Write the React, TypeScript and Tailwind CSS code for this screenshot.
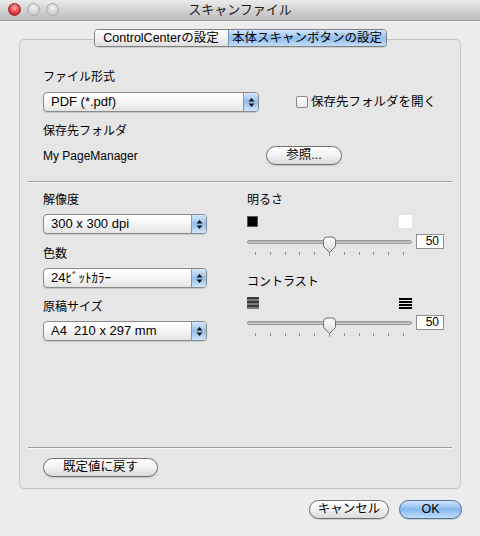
import React from "react";

const FONT = "font-['Liberation_Sans','Noto_Sans_CJK_JP',sans-serif]";

function Arrows() {
  return (
    <svg width="7" height="11" viewBox="0 0 7 11">
      <path d="M3.5 1 L6.5 4.5 H0.5 Z" fill="#111" />
      <path d="M3.5 10 L6.5 6.5 H0.5 Z" fill="#111" />
    </svg>
  );
}

function Popup({ label, width }: { label: string; width: string }) {
  return (
    <div
      className={`${width} h-[20px] flex rounded-[4px] border border-[#8a8a8a] bg-gradient-to-b from-white via-[#f6f6f6] to-[#e4e4e4] overflow-hidden shadow-[0_1px_1px_rgba(0,0,0,0.12)]`}
    >
      <span className="flex-1 pl-[7px] text-[13px] leading-[18px] text-black whitespace-pre">
        {label}
      </span>
      <span className="w-[15px] border-l border-[#7798c0] bg-gradient-to-b from-[#d6e8fa] via-[#93bfec] to-[#cfe5fb] flex items-center justify-center">
        <Arrows />
      </span>
    </div>
  );
}

function PushButton({
  label,
  width,
  blue = false,
}: {
  label: string;
  width: string;
  blue?: boolean;
}) {
  return (
    <div
      className={`${width} h-[19px] rounded-full border flex items-center justify-center text-[12.5px] leading-none text-black shadow-[0_1px_1px_rgba(0,0,0,0.15)] ${
        blue
          ? "border-[#4c6f9c] bg-gradient-to-b from-[#d2e6fc] via-[#86b9f0] to-[#c0dcfb]"
          : "border-[#707070] bg-gradient-to-b from-white via-[#f2f2f2] to-[#dadada]"
      }`}
    >
      {label}
    </div>
  );
}

function Thumb() {
  return (
    <svg width="15" height="18" viewBox="0 0 15 18">
      <defs>
        <linearGradient id="tg" x1="0" y1="0" x2="0" y2="1">
          <stop offset="0" stopColor="#ffffff" />
          <stop offset="1" stopColor="#d8d8d8" />
        </linearGradient>
      </defs>
      <path
        d="M1.5 4.5 Q1.5 1 5 1 H10 Q13.5 1 13.5 4.5 V10.5 L7.5 16.5 L1.5 10.5 Z"
        fill="url(#tg)"
        stroke="#6f6f6f"
        strokeWidth="1"
      />
    </svg>
  );
}

function Slider({ value }: { value: number }) {
  const ticks = Array.from({ length: 11 }, (_, i) => i);
  return (
    <div className="flex flex-col">
      <div className="flex items-start h-[16px]">
        <div className="relative w-[165px] h-[16px]">
          <div className="absolute left-0 right-0 top-[6px] h-[4px] rounded-full border border-[#9a9a9a] bg-gradient-to-b from-[#a9a9a9] to-[#d4d4d4]" />
          <div className="absolute left-[75px] top-[2px]">
            <Thumb />
          </div>
        </div>
        <div className="ml-[4px] w-[28px] h-[15px] border border-[#8f8f8f] bg-white text-right pr-[4px] text-[12px] leading-[13px] text-black">
          {value}
        </div>
      </div>
      <div className="mt-[2px] ml-[8px] w-[149px] h-[4px] flex justify-between">
        {ticks.map((t) => (
          <span
            key={t}
            className={`w-px bg-[#8c8c8c] ${t === 5 ? "h-[4px]" : "h-[3px]"}`}
          />
        ))}
      </div>
    </div>
  );
}

function LowContrastIcon() {
  return (
    <div className="w-[12px] h-[12px] flex flex-col">
      {[0, 1, 2, 3, 4, 5].map((i) => (
        <span
          key={i}
          className={`h-[2px] ${i % 2 === 0 ? "bg-[#3a3a3a]" : "bg-[#7c7c7c]"}`}
        />
      ))}
    </div>
  );
}

function HighContrastIcon() {
  return (
    <div className="w-[13px] h-[13px] flex flex-col justify-between py-[1px]">
      {[0, 1, 2, 3].map((i) => (
        <span key={i} className="h-[2px] bg-black" />
      ))}
    </div>
  );
}

export default function App() {
  return (
    <div className={`w-[480px] h-[536px] bg-[#ececec] flex flex-col ${FONT}`}>
      {/* Title bar */}
      <div className="h-[21px] flex items-center border-b border-[#9b9b9b] bg-gradient-to-b from-[#ebebeb] to-[#bcbcbc] relative">
        <div className="flex items-center gap-[6px] pl-[8px] -mt-[1px]">
          <span className="w-[13px] h-[13px] rounded-full border border-[#9c2b2b] bg-[radial-gradient(circle_at_50%_35%,#ffb3b3,#e23b3b_55%,#b51515)]" />
          <span className="w-[13px] h-[13px] rounded-full border border-[#a8a8a8] bg-[radial-gradient(circle_at_50%_35%,#f4f4f4,#d2d2d2_60%,#bdbdbd)]" />
          <span className="w-[13px] h-[13px] rounded-full border border-[#a8a8a8] bg-[radial-gradient(circle_at_50%_35%,#f4f4f4,#d2d2d2_60%,#bdbdbd)]" />
        </div>
        <span className="absolute inset-x-0 top-0 h-[20px] flex items-center justify-center text-[13px] text-[#1a1a1a]">
          スキャンファイル
        </span>
      </div>

      {/* Tabs */}
      <div className="mt-[8px] flex justify-center relative z-10">
        <div className="flex h-[18px] rounded-[4px] border border-[#808080] overflow-hidden text-[12.5px] leading-[16px] shadow-[0_1px_1px_rgba(0,0,0,0.12)]">
          <div className="w-[133px] flex items-center justify-center bg-gradient-to-b from-white via-[#f3f3f3] to-[#dedede] text-black">
            ControlCenterの設定
          </div>
          <div className="w-[158px] flex items-center justify-center border-l border-[#6f8fb5] bg-gradient-to-b from-[#d4e7fb] via-[#8fbdee] to-[#c3dcf8] text-black">
            本体スキャンボタンの設定
          </div>
        </div>
      </div>

      {/* Group box */}
      <div className="mx-[19px] -mt-[8px] h-[450px] rounded-[5px] border border-[#c6c6c6] bg-[#e6e6e6] flex flex-col text-[12px] leading-[16px] text-black">
        <div className="pt-[29px] px-[23px] flex flex-col">
          <div className="h-[16px]">ファイル形式</div>
          <div className="mt-[7px] flex items-center">
            <Popup label="PDF (*.pdf)" width="w-[216px]" />
            <div className="ml-[37px] flex items-center gap-[3px]">
              <span className="w-[12px] h-[12px] rounded-[2px] border border-[#8a8a8a] bg-gradient-to-b from-white to-[#e8e8e8]" />
              <span className="text-[12.5px]">保存先フォルダを開く</span>
            </div>
          </div>
          <div className="mt-[11px] h-[16px]">保存先フォルダ</div>
          <div className="mt-[7px] flex items-center h-[19px]">
            <span className="w-[223px]">My PageManager</span>
            <PushButton label="参照..." width="w-[76px]" />
          </div>
        </div>

        <div className="mt-[16px] mx-[8px] h-[2px] border-t border-[#9d9d9d] border-b border-b-[#f7f7f7]" />

        <div className="pt-[9px] px-[23px] flex">
          <div className="w-[164px] flex flex-col">
            <div className="h-[16px]">解像度</div>
            <div className="mt-[6px]">
              <Popup label="300 x 300 dpi" width="w-[164px]" />
            </div>
            <div className="mt-[12px] h-[16px]">色数</div>
            <div className="mt-[6px]">
              <Popup label="24ﾋﾞｯﾄｶﾗｰ" width="w-[164px]" />
            </div>
            <div className="mt-[11px] h-[16px]">原稿サイズ</div>
            <div className="mt-[6px]">
              <Popup label="A4  210 x 297 mm" width="w-[164px]" />
            </div>
          </div>

          <div className="ml-[40px] w-[197px] flex flex-col">
            <div className="h-[16px]">明るさ</div>
            <div className="mt-[7px] w-[165px] h-[13px] flex justify-between items-start">
              <span className="w-[11px] h-[11px] bg-black border border-[#555] mt-[1px]" />
              <span className="w-[13px] h-[13px] bg-white" />
            </div>
            <div className="mt-[6px]">
              <Slider value={50} />
            </div>
            <div className="mt-[18px] h-[16px]">コントラスト</div>
            <div className="mt-[7px] w-[165px] h-[13px] flex justify-between items-start">
              <LowContrastIcon />
              <HighContrastIcon />
            </div>
            <div className="mt-[5px]">
              <Slider value={50} />
            </div>
          </div>
        </div>

        <div className="flex-1" />

        <div className="mx-[8px] h-[2px] border-t border-[#9d9d9d] border-b border-b-[#f7f7f7]" />
        <div className="pt-[9px] pb-[11px] px-[23px] flex">
          <PushButton label="既定値に戻す" width="w-[115px]" />
        </div>
      </div>

      {/* Footer */}
      <div className="mt-[11px] pr-[18px] flex justify-end gap-[10px]">
        <PushButton label="キャンセル" width="w-[80px]" />
        <PushButton label="OK" width="w-[63px]" blue />
      </div>
    </div>
  );
}
